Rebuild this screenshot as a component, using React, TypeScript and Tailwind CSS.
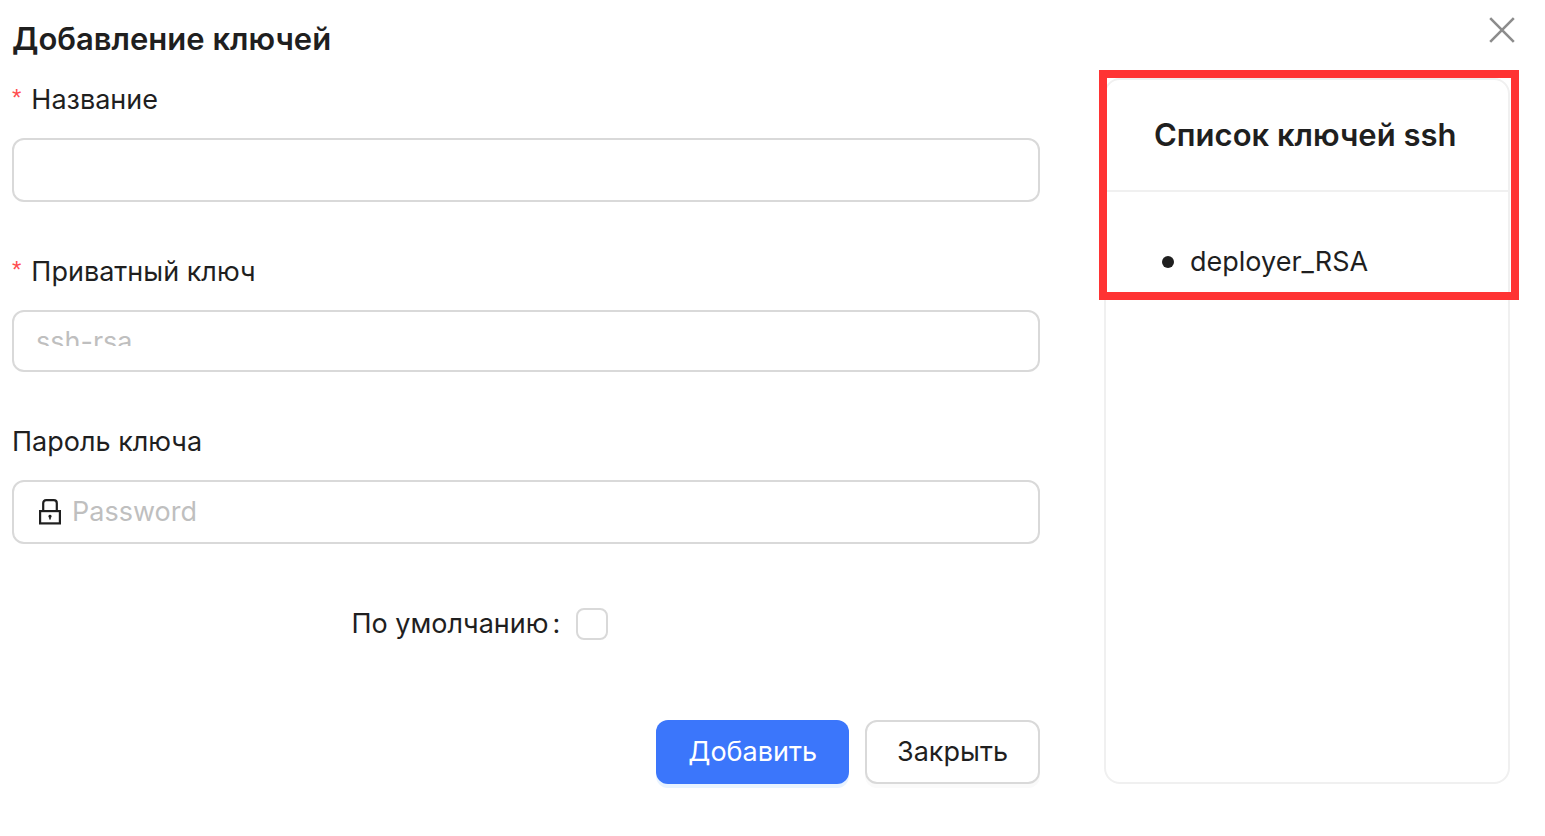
import React from 'react';

const boxClass = 'w-full rounded-xl border-2 border-[#d9d9d9] bg-white px-[22px]';

interface LabelProps {
  htmlFor: string;
  required?: boolean;
  children: React.ReactNode;
}

const FieldLabel: React.FC<LabelProps> = ({ htmlFor, required, children }) => (
  <label htmlFor={htmlFor} className="mb-4 flex items-start">
    {required && <span className="mr-[10px] font-['Liberation_Sans'] text-2xl leading-[40px] text-[#ff4d4f]">*</span>}
    {children}
  </label>
);

const LockIcon: React.FC = () => (
  <svg viewBox="0 0 24 26" className="h-[26px] w-6 shrink-0" fill="none" aria-hidden="true">
    <path d="M5.2 12V4.2Q5.2 1.2 8.2 1.2H15.8Q18.8 1.2 18.8 4.2V12" stroke="#1f1f1f" strokeWidth="2.2" />
    <rect x="2.1" y="12.1" width="19.8" height="12.3" stroke="#1f1f1f" strokeWidth="2.2" />
    <path d="M12 15.8a1.6 1.6 0 0 1 .8 3v1.8h-1.6v-1.8a1.6 1.6 0 0 1 .8-3Z" fill="#1f1f1f" />
  </svg>
);

const KeyForm: React.FC = () => (
  <form className="min-w-0 flex-1" onSubmit={(e) => e.preventDefault()}>
    <div className="mb-12">
      <FieldLabel htmlFor="name" required>Название</FieldLabel>
      <input id="name" type="text" className={`${boxClass} block h-16 outline-none focus:border-[#3b76fb]`} />
    </div>

    <div className="mb-12">
      <FieldLabel htmlFor="private-key" required>Приватный ключ</FieldLabel>
      <div className={`${boxClass} pt-2 pb-6 focus-within:border-[#3b76fb]`}>
        <textarea
          id="private-key"
          rows={1}
          placeholder="ssh-rsa"
          className="block h-[26px] w-full resize-none overflow-hidden bg-transparent outline-none placeholder:text-[#bfbfbf]"
        />
      </div>
    </div>

    <div className="mb-12">
      <FieldLabel htmlFor="password">Пароль ключа</FieldLabel>
      <div className={`${boxClass} flex h-16 items-center gap-[10px] pl-6 focus-within:border-[#3b76fb]`}>
        <LockIcon />
        <input
          id="password"
          type="password"
          placeholder="Password"
          className="min-w-0 flex-1 bg-transparent outline-none placeholder:text-[#bfbfbf]"
        />
      </div>
    </div>

    <div className="mb-16 flex h-16 items-center gap-4">
      <label htmlFor="default" className="flex w-8/15 justify-end gap-1">
        <span>По умолчанию</span>
        <span>:</span>
      </label>
      <input
        id="default"
        type="checkbox"
        className="size-8 appearance-none rounded-lg border-2 border-[#d9d9d9] bg-white checked:border-[#3b76fb] checked:bg-[#3b76fb]"
      />
    </div>

    <div className="flex justify-end gap-4">
      <button type="submit" className="h-16 rounded-xl bg-[#3b76fb] px-8 text-white shadow-[0_4px_0_#e8f3ff]">
        Добавить
      </button>
      <button type="button" className="h-16 rounded-xl border-2 border-[#d9d9d9] bg-white px-[30px] shadow-[0_4px_0_#fafafa]">
        Закрыть
      </button>
    </div>
  </form>
);

const KeyList: React.FC = () => (
  <aside className="relative w-[406px] shrink-0 rounded-2xl border-2 border-[#f0f0f0]">
    <div className="flex h-28 items-center border-b-2 border-[#f0f0f0] px-12">
      <h2 className="text-[31px] font-semibold whitespace-nowrap">Список ключей ssh</h2>
    </div>
    <ul className="p-12">
      <li className="flex items-center gap-4 pl-2">
        <span className="size-3 rounded-full bg-[#1f1f1f]"></span>
        deployer_RSA
      </li>
    </ul>
    <div className="pointer-events-none absolute -top-[10px] -right-[11px] -left-[7px] h-[230px] border-8 border-[#ff3333]"></div>
  </aside>
);

const App: React.FC = () => {
  return (
    <main className="bg-white pb-[52px] font-['Inter','Liberation_Sans',sans-serif] text-[27px] leading-[44px] text-[#1f1f1f]">
      <header className="flex h-[78px] items-center justify-between pr-[21px] pl-3">
        <h1 className="text-[31px] font-semibold">Добавление ключей</h1>
        <button type="button" aria-label="Закрыть окно" className="mb-[18px] flex size-11 items-center justify-center">
          <svg viewBox="0 0 26 26" className="size-[26px]" fill="none" stroke="#8c8c8c" strokeWidth="2.6" aria-hidden="true">
            <path d="M1.2 1.2 24.8 24.8M24.8 1.2 1.2 24.8" />
          </svg>
        </button>
      </header>
      <div className="flex gap-16 pr-[35px] pl-3">
        <KeyForm />
        <KeyList />
      </div>
    </main>
  );
};

export default App;
